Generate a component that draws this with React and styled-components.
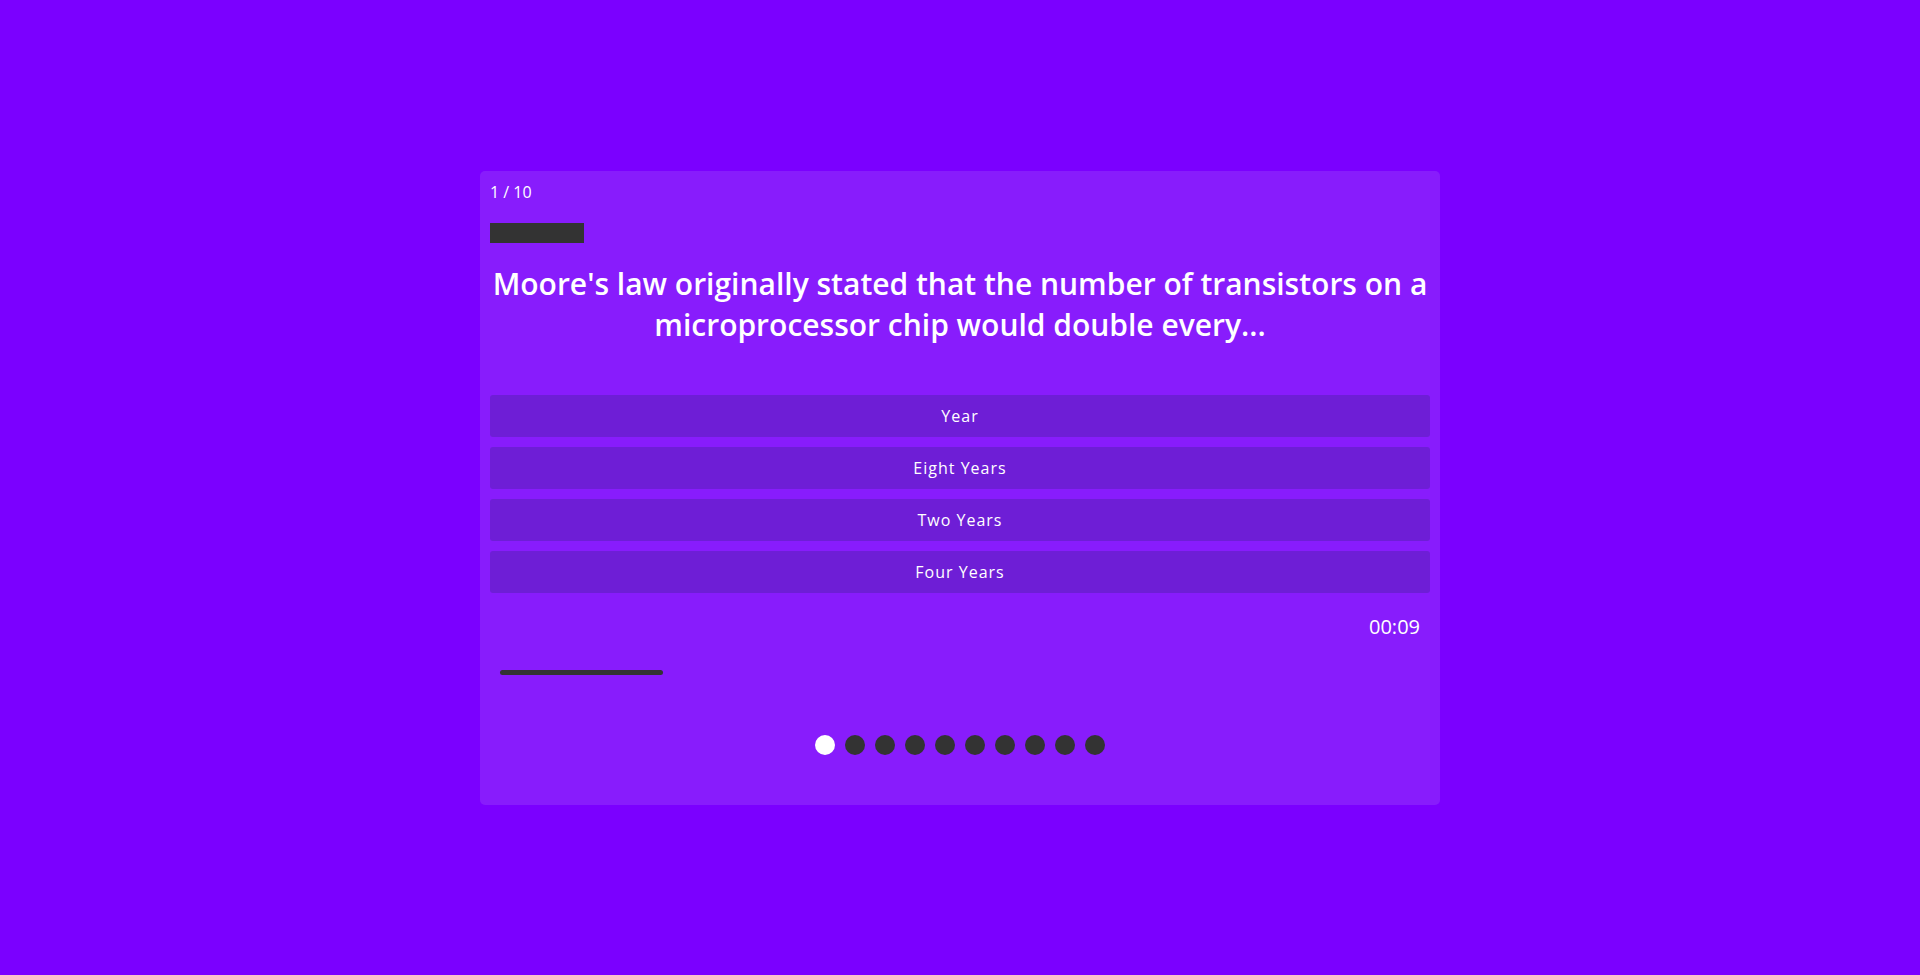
import React from 'react';
import styled, { createGlobalStyle } from 'styled-components';

const GlobalStyle = createGlobalStyle`
    html, body {
        margin: 0;
        padding: 0;
        background: #7b00ff;
        font-family: "Open Sans", "Liberation Sans", sans-serif;
    }
`;

const Page = styled.div`
    min-height: 975px;
    display: flex;
    justify-content: center;
    align-items: flex-start;
    padding-top: 171px;
    box-sizing: border-box;
`;

const Card = styled.div`
    width: 960px;
    box-sizing: border-box;
    background: #881cfc;
    border-radius: 5px;
    padding: 9px 10px 50px;
    display: flex;
    flex-direction: column;
    color: #fff;
`;

const Counter = styled.div`
    font-size: 16px;
    line-height: 24px;
`;

const ProgressTrack = styled.div`
    margin-top: 19px;
    height: 20px;
`;

const ProgressFill = styled.div`
    height: 100%;
    background: #333;
`;

const Question = styled.h2`
    margin: 20px 0 0;
    font-size: 30px;
    font-weight: 600;
    line-height: 41px;
    text-align: center;
`;

const Options = styled.div`
    margin-top: 50px;
    display: flex;
    flex-direction: column;
    gap: 10px;
`;

const Option = styled.button`
    height: 42px;
    border: none;
    border-radius: 3px;
    background: #6e1ed6;
    color: #fff;
    font-family: inherit;
    font-size: 16px;
    letter-spacing: 1px;
    cursor: pointer;
`;

const Timer = styled.div`
    margin-top: 20px;
    padding-right: 10px;
    text-align: right;
    font-size: 20px;
    line-height: 27px;
`;

const TimerTrack = styled.div`
    margin-top: 30px;
    padding: 0 10px;
`;

const TimerBar = styled.div`
    height: 5px;
    border-radius: 3px;
    background: #333;
`;

const Dots = styled.div`
    margin-top: 60px;
    display: flex;
    justify-content: center;
    gap: 10px;
`;

const Dot = styled.span`
    width: 20px;
    height: 20px;
    border-radius: 50%;
    background: ${props => (props.active ? '#fff' : '#333')};
`;

const answers = ['Year', 'Eight Years', 'Two Years', 'Four Years'];

const App = () => {
    const current = 1;
    const total = 10;
    return (
        <Page>
            <GlobalStyle />
            <Card>
                <Counter>{current} / {total}</Counter>
                <ProgressTrack>
                    <ProgressFill style={{ width: `${(current / total) * 100}%` }} />
                </ProgressTrack>
                <Question>
                    Moore's law originally stated that the number of transistors on a microprocessor chip would double every...
                </Question>
                <Options>
                    {answers.map(a => (
                        <Option key={a}>{a}</Option>
                    ))}
                </Options>
                <Timer>00:09</Timer>
                <TimerTrack>
                    <TimerBar style={{ width: '163px' }} />
                </TimerTrack>
                <Dots>
                    {Array.from({ length: total }).map((_, i) => (
                        <Dot key={i} active={i === current - 1} />
                    ))}
                </Dots>
            </Card>
        </Page>
    );
};

export default App;
